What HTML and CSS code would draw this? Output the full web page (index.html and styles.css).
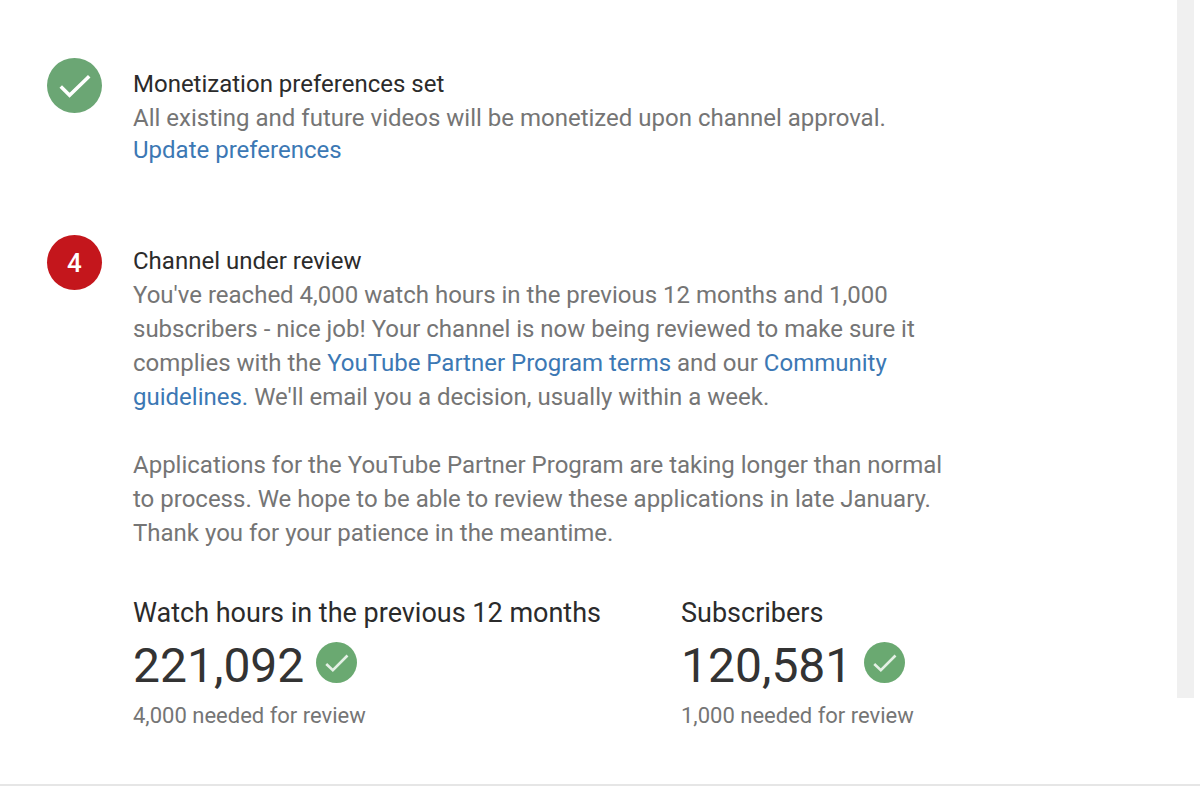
FILE: index.html
```html
<!DOCTYPE html>
<html lang="en">
<head>
  <meta charset="UTF-8">
  <meta name="viewport" content="width=device-width, initial-scale=1.0">
  <title>Channel monetization</title>
  <link rel="stylesheet" href="styles.css">
</head>
<body>
  <div class="page">
    <main class="steps">
      <section class="step">
        <svg class="badge" viewBox="0 0 56 56" aria-hidden="true">
          <circle cx="28" cy="28" r="28" fill="#6ba674"/>
          <path d="M14 29l9 9L43 18.500" fill="none" stroke="#fff" stroke-width="3.600"/>
        </svg>
        <div class="step-body">
          <h2>Monetization preferences set</h2>
          <p>All existing and future videos will be monetized upon channel approval.</p>
          <a class="update" href="#">Update preferences</a>
        </div>
      </section>

      <section class="step">
        <div class="badge badge-number">4</div>
        <div class="step-body">
          <h2>Channel under review</h2>
          <p>You've reached 4,000 watch hours in the previous 12 months and 1,000 subscribers - nice job! Your channel is now being reviewed to make sure it complies with the <a href="#">YouTube Partner Program terms</a> and our <a href="#">Community guidelines.</a> We'll email you a decision, usually within a week.</p>
          <p class="notice">Applications for the YouTube Partner Program are taking longer than normal to process. We hope to be able to review these applications in late January. Thank you for your patience in the meantime.</p>

          <div class="stats">
            <div class="stat">
              <h3>Watch hours in the previous 12 months</h3>
              <div class="count">221,092
                <svg class="check" viewBox="0 0 56 56" aria-hidden="true">
                  <circle cx="28" cy="28" r="28" fill="#6aa971"/>
                  <path d="M14 30l9 8.500L43 18.500" fill="none" stroke="#e4f0e5" stroke-width="3.600"/>
                </svg>
              </div>
              <p class="needed">4,000 needed for review</p>
            </div>
            <div class="stat">
              <h3>Subscribers</h3>
              <div class="count">120,581
                <svg class="check" viewBox="0 0 56 56" aria-hidden="true">
                  <circle cx="28" cy="28" r="28" fill="#6aa971"/>
                  <path d="M14 30l9 8.500L43 18.500" fill="none" stroke="#e4f0e5" stroke-width="3.600"/>
                </svg>
              </div>
              <p class="needed">1,000 needed for review</p>
            </div>
          </div>
        </div>
      </section>
    </main>
    <div class="side-bar"></div>
  </div>
</body>
</html>
```

FILE: styles.css
```css
* {
  box-sizing: border-box;
}
body {
  font-family: Roboto, "Liberation Sans", sans-serif;
  font-size: 24px;
  line-height: 34px;
  color: #757575;
  background: #fff;
  margin: 0;
}
h2, h3, p {
  margin: 0;
  font-weight: 400;
}
a {
  color: #3c78b4;
  text-decoration: none;
}
.page {
  display: flex;
  border-bottom: 2px solid #e6e6e6;
  box-shadow: 0 1px 2px #f0f0f0;
}
.steps {
  flex: 1;
  padding: 58px 0 54px 47px;
}
.step {
  display: flex;
  align-items: flex-start;
  gap: 31px;
  margin-bottom: 70px;
}
.step:last-child {
  margin-bottom: 0;
}
.badge {
  flex: none;
  width: 55px;
  height: 55px;
}
.badge-number {
  display: flex;
  align-items: center;
  justify-content: center;
  border-radius: 50%;
  background: #c4161c;
  color: #fff;
  font-size: 26px;
  font-weight: 500;
}
.step-body {
  flex: 1;
  max-width: 816px;
  padding-top: 9px;
}
h2 {
  font-size: 24px;
  color: #2b2b2b;
}
.update {
  display: block;
  width: fit-content;
  line-height: 30px;
}
.notice {
  margin-top: 34px;
}
.stats {
  display: grid;
  grid-template-columns: 2fr 1fr;
  gap: 12px;
  margin-top: 46px;
}
h3 {
  font-size: 27px;
  color: #2b2b2b;
}
.count {
  display: flex;
  align-items: center;
  gap: 12px;
  font-size: 48px;
  line-height: 72px;
  color: #333;
}
.check {
  width: 41px;
  height: 41px;
  margin-bottom: 8px;
}
.needed {
  font-size: 22px;
  line-height: 28px;
}
.side-bar {
  width: 17px;
  height: 698px;
  margin-right: 6px;
  background: #f0f0f0;
}
```
